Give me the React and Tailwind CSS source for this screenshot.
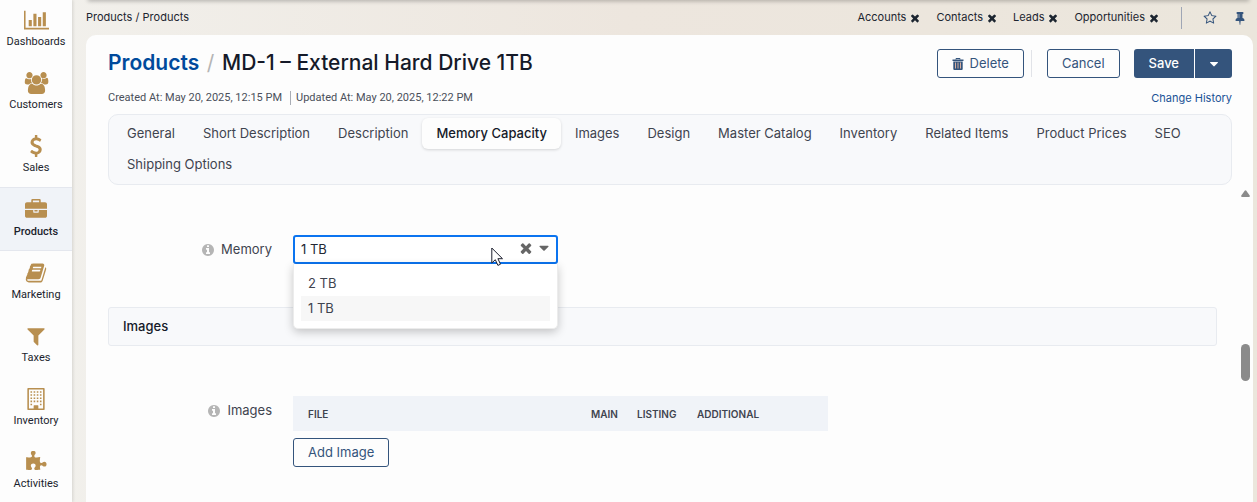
import React, { useState } from "react";

const PATHS = {
  chart:
    "M640 896v512h-256v-512h256zm384-512v1024h-256v-1024h256zm1024 1152v128h-2048v-1536h128v1408h1920zm-640-896v768h-256v-768h256zm384-384v1152h-256v-1152h256z",
  users:
    "M657 896q-162 5-265 128h-134q-82 0-138-40.5t-56-118.5q0-353 124-353 6 0 43.5 21t97.5 42.5 119 21.5q67 0 133-23-5 37-5 66 0 159 93 293zm1071 637q0 120-73 189.5t-194 69.5h-874q-121 0-194-69.5t-73-189.5q0-53 3.5-103.5t14-109 26.5-108.5 43-97.5 62-81 85.5-53.5 111.5-20q10 0 43 21.5t73 48 107 48 135 21.5 135-21.5 107-48 73-48 43-21.5q61 0 111.5 20t85.5 53.5 62 81 43 97.5 26.5 108.5 14 109 3.5 103.5zm-1024-1277q0 106-75 181t-181 75-181-75-75-181 75-181 181-75 181 75 75 181zm704 384q0 159-112.5 271.5t-271.5 112.5-271.5-112.5-112.5-271.5 112.5-271.5 271.5-112.5 271.5 112.5 112.5 271.5zm576 225q0 78-56 118.5t-138 40.5h-134q-103-123-265-128 93-134 93-293 0-29-5-66 66 23 133 23 59 0 119-21.5t97.5-42.5 43.5-21q124 0 124 353zm-128-609q0 106-75 181t-181 75-181-75-75-181 75-181 181-75 181 75 75 181z",
  dollar:
    "M1362 1185q0 153-99.5 263.5t-258.5 136.5v175q0 14-9 23t-23 9h-135q-13 0-22.5-9.5t-9.5-22.5v-175q-66-9-127.5-31t-101.5-44.5-74-48-46.5-37.5-17.5-18q-17-21-2-41l103-135q7-10 23-12 15-2 24 9l2 2q113 99 243 125 37 8 74 8 81 0 142.5-43t61.5-122q0-28-15-53t-33.5-42-58.5-37.5-66-32-80-32.5q-39-16-61.5-25t-61.5-26.5-62.5-31-56.5-35.5-53.5-42.5-43.5-49-35.5-58-21-66.5-8.5-78q0-138 98-242t255-134v-180q0-13 9.5-22.5t22.5-9.5h135q14 0 23 9t9 23v176q57 6 110.5 23t87 33.5 63.5 37.5 39 29 15 14q17 18 5 38l-81 146q-8 15-23 16-14 3-27-7-3-3-14.5-12t-39-26.5-58.5-32-74.5-26-85.5-11.5q-95 0-155 43t-60 111q0 26 8.5 48t29.5 41.5 39.5 33 56 31 60.5 27 70 27.5q53 20 81 31.5t76 35 75.5 42.5 62 50 53 63.5 31.5 76.5 13 94z",
  briefcase:
    "M640 256h512v-128h-512v128zm1152 640v480q0 66-47 113t-113 47h-1472q-66 0-113-47t-47-113v-480h672v160q0 26 19 45t45 19h320q26 0 45-19t19-45v-160h672zm-768 0v128h-256v-128h256zm768-480v384h-1792v-384q0-66 47-113t113-47h352v-160q0-40 28-68t68-28h576q40 0 68 28t28 68v160h352q66 0 113 47t47 113z",
  book:
    "M1703 478q40 57 18 129l-275 906q-19 64-76.5 107.5t-122.5 43.5h-923q-77 0-148.5-53.5t-99.5-131.5q-24-67-2-127 0-4 3-27t4-37q1-8-3-21.5t-3-19.5q2-11 8-21t16.5-23.5 16.5-23.5q23-38 45-91.5t30-91.5q3-10 .5-30t-.5-28q3-11 17-28t17-23q21-36 42-92t25-90q1-9-2.5-32t.5-28q4-13 22-30.5t22-22.5q19-26 42.5-84.5t27.5-96.5q1-8-3-25.5t-2-26.5q2-8 9-18t18-23 17-21q8-12 16.5-30.5t15-35 16-36 19.5-32 26.5-23.5 36-11.5 47.5 5.5l-1 3q38-9 51-9h761q74 0 114 56t18 130l-274 906q-36 119-71.5 153.5t-128.5 34.5h-869q-27 0-38 15-11 16-1 43 24 70 144 70h923q29 0 56-15.5t35-41.5l300-987q7-22 5-57 38 15 59 43zm-1064 2q-4 13 2 22.5t20 9.5h608q13 0 25.5-9.5t16.5-22.5l21-64q4-13-2-22.5t-20-9.5h-608q-13 0-25.5 9.5t-16.5 22.5zm-83 256q-4 13 2 22.5t20 9.5h608q13 0 25.5-9.5t16.5-22.5l21-64q4-13-2-22.5t-20-9.5h-608q-13 0-25.5 9.5t-16.5 22.5z",
  filter:
    "M1595 295q17 41-14 70l-493 493v742q0 42-39 59-13 5-25 5-27 0-45-19l-256-256q-19-19-19-45v-486l-493-493q-31-29-14-70 17-39 59-39h1280q42 0 59 39z",
  building:
    "M1536 0q26 0 45 19t19 45v1664q0 26-19 45t-45 19h-1280q-26 0-45-19t-19-45v-1664q0-26 19-45t45-19h1280zM1472 128h-1152v1536h384v-224q0-13 9.500-22.500t22.500-9.500h320q13 0 22.500 9.500t9.500 22.500v224h384zM448 256h128v128h-128zM704 256h128v128h-128zM960 256h128v128h-128zM1216 256h128v128h-128zM448 512h128v128h-128zM704 512h128v128h-128zM960 512h128v128h-128zM1216 512h128v128h-128zM448 768h128v128h-128zM704 768h128v128h-128zM960 768h128v128h-128zM1216 768h128v128h-128zM448 1024h128v128h-128zM704 1024h128v128h-128zM960 1024h128v128h-128zM1216 1024h128v128h-128zM448 1280h128v128h-128zM1216 1280h128v128h-128z",
  puzzle:
    "M1755 1083q0 81-44.5 135t-123.5 54q-41 0-77.500-17.500t-59-38-56.500-38-71-17.500q-110 0-110 124 0 39 16 115t15 115v5q-22 0-33 1-34 3-97.500 11.500t-115.500 13.500-98 5q-61 0-103-26.500t-42-83.500q0-37 17.500-71t38-56.500 38-59 17.500-77.500q0-79-54-123.500t-135-44.500q-84 0-143 45.500t-59 127.500q0 43 15 83t33.500 64.500 33.500 53 15 50.500q0 45-46 89-37 35-117 35-95 0-245-24-9-2-27.500-4t-27.500-4l-13-2q-1 0-3-1-2 0-2-1v-1024q2 1 17.500 3.500t34 5 21.500 3.500q150 24 245 24 80 0 117-35 46-44 46-89 0-22-15-50.500t-33.500-53-33.500-64.500-15-83q0-82 59-127.500t144-45.500q80 0 134 44.500t54 123.500q0 41-17.500 77.500t-38 59-38 56.500-17.500 71q0 57 42 83.500t103 26.500q64 0 180-15t163-17v2q-1 2-3.500 17.500t-5 34-3.500 21.500q-24 150-24 245 0 80 35 117 44 46 89 46 22 0 50.500-15t53-33.500 64.500-33.500 83-15q82 0 127.500 59t45.500 143z",
  times:
    "M1490 1322q0 40-28 68l-136 136q-28 28-68 28t-68-28l-294-294-294 294q-28 28-68 28t-68-28l-136-136q-28-28-28-68t28-68l294-294-294-294q-28-28-28-68t28-68l136-136q28-28 68-28t68 28l294 294 294-294q28-28 68-28t68 28l136 136q28 28 28 68t-28 68l-294 294 294 294q28 28 28 68z",
  info:
    "M1152 1376v-160q0-14-9-23t-23-9h-96v-512q0-14-9-23t-23-9h-320q-14 0-23 9t-9 23v160q0 14 9 23t23 9h96v320h-96q-14 0-23 9t-9 23v160q0 14 9 23t23 9h448q14 0 23-9t9-23zm-128-896v-160q0-14-9-23t-23-9h-192q-14 0-23 9t-9 23v160q0 14 9 23t23 9h192q14 0 23-9t9-23zm640 416q0 209-103 385.500t-279.500 279.500-385.500 103-385.500-103-279.500-279.500-103-385.500 103-385.500 279.500-279.500 385.500-103 385.500 103 279.500 279.500 103 385.500z",
  caret:
    "M1408 704q0 26-19 45l-448 448q-19 19-45 19t-45-19l-448-448q-19-19-19-45t19-45 45-19h896q26 0 45 19t19 45z",
  star:
    "M1201 1004l306-297-422-62-189-382-189 382-422 62 306 297-73 421 378-199 377 199zm527-357q0 22-26 48l-363 354 86 500q1 7 1 20 0 50-41 50-19 0-40-12l-449-236-449 236q-22 12-40 12-21 0-31.500-14.500t-10.500-35.500q0-6 2-20l86-500-364-354q-25-27-25-48 0-37 56-46l502-73 225-455q19-41 49-41t49 41l225 455 502 73q56 9 56 46z",
  pin:
    "M800 864v-448q0-14-9-23t-23-9-23 9-9 23v448q0 14 9 23t23 9 23-9 9-23zm672 352q0 26-19 45t-45 19h-429l-51 483q-2 12-10.500 20.500t-20.500 8.500h-1q-27 0-32-27l-76-485h-404q-26 0-45-19t-19-45q0-123 78.500-221.500t177.500-98.500v-512q-52 0-90-38t-38-90 38-90 90-38h640q52 0 90 38t38 90-38 90-90 38v512q99 0 177.500 98.500t78.500 221.500z",
};

function Icon({ name, wide, className }) {
  return (
    <svg
      viewBox={wide ? "0 0 2048 1792" : "0 0 1792 1792"}
      fill="currentColor"
      fillRule={name === "building" ? "evenodd" : "nonzero"}
      aria-hidden="true"
      className={className}
    >
      <path d={PATHS[name]} />
    </svg>
  );
}

const NAV = [
  { label: "Dashboards", icon: "chart", wide: true },
  { label: "Customers", icon: "users", wide: true },
  { label: "Sales", icon: "dollar" },
  { label: "Products", icon: "briefcase", active: true },
  { label: "Marketing", icon: "book" },
  { label: "Taxes", icon: "filter" },
  { label: "Inventory", icon: "building" },
  { label: "Activities", icon: "puzzle" },
];

const TABS = [
  "General",
  "Short Description",
  "Description",
  "Memory Capacity",
  "Images",
  "Design",
  "Master Catalog",
  "Inventory",
  "Related Items",
  "Product Prices",
  "SEO",
  "Shipping Options",
];

function Sidebar() {
  return (
    <nav className="relative z-10 w-[72px] shrink-0 overflow-hidden bg-[#fdfdfd] shadow-[1px_0_3px_rgba(0,0,0,0.12)]">
      <ul className="-mt-0.5">
        {NAV.map((n) => (
          <li key={n.label}>
            <a
              href="#"
              className={
                n.active
                  ? "flex h-16 flex-col items-center border-y border-[#e4e7ee] bg-[#f0f3f8] pt-[11px] font-['Roboto',sans-serif] text-[11px] leading-4 font-medium text-[#1c1f2e]"
                  : "flex h-[63px] flex-col items-center pt-[11px] font-['Roboto',sans-serif] text-[11px] leading-4 text-[#1c1f2e]"
              }
            >
              <Icon
                name={n.icon}
                wide={n.wide}
                className={n.wide ? "h-[22px] w-[25px] text-[#b88f50]" : "size-[22px] text-[#b88f50]"}
              />
              <span className="mt-[3px]">{n.label}</span>
            </a>
          </li>
        ))}
      </ul>
    </nav>
  );
}

function TopBar() {
  return (
    <div className="flex h-[35px] items-center justify-between pr-1.5 text-[11px] text-[#1c2530]">
      <div>
        <a href="#">Products</a> / <a href="#">Products</a>
      </div>
      <div className="flex items-center">
        <ul className="flex items-center gap-[15px]">
          {["Accounts", "Contacts", "Leads", "Opportunities"].map((p) => (
            <li key={p} className="flex items-center gap-[3px]">
              <a href="#">{p}</a>
              <button type="button" aria-label={`Close ${p}`}>
                <Icon name="times" className="size-3" />
              </button>
            </li>
          ))}
        </ul>
        <div className="ml-[21px] h-[22px] w-px bg-[#9fa6b5]" />
        <button type="button" aria-label="Add to favorites" className="ml-[21px] text-[#34547c]">
          <Icon name="star" className="size-[14px]" />
        </button>
        <button type="button" aria-label="Pin page" className="ml-4 text-[#34547c]">
          <Icon name="pin" className="size-[14px]" />
        </button>
      </div>
    </div>
  );
}

function TrashIcon() {
  return (
    <svg viewBox="0 0 12 12" className="size-3" aria-hidden="true">
      <path d="M4 1.500V.5h4v1" fill="none" stroke="currentColor" />
      <path d="M.5 1.500h11v1.500h-11zM1.300 3.500h9.400v7.500q0 1-1 1h-7.400q-1 0-1-1z" fill="currentColor" />
      <path d="M3.500 4.500v6M6 4.500v6M8.500 4.500v6" stroke="#e9b9a4" strokeWidth="0.900" />
    </svg>
  );
}

function PageHeader() {
  const outline =
    "flex h-[29px] items-center justify-center gap-1.5 rounded-[3px] border border-[#34547c] px-3.5 text-[13px] text-[#34547c]";
  return (
    <header>
      <div className="flex items-start justify-between">
        <h1 className="pt-[13px] text-[21px] leading-[30px] font-medium whitespace-nowrap text-[#151a29]">
          <a href="#" className="mr-0.5 font-semibold text-[#004a9c]">
            Products
          </a>{" "}
          <span className="mr-0.5 font-normal text-[#b5b5b5]">/</span> MD-1 – External Hard Drive 1TB
        </h1>
        <div className="flex items-center pt-3.5">
          <button type="button" className={outline}>
            <TrashIcon />
            Delete
          </button>
          <div className="mr-[15px] ml-[7px] h-[27px] w-px bg-[#e1e3e8]" />
          <button type="button" className={outline}>
            Cancel
          </button>
          <div className="ml-3.5 flex h-[29px] overflow-hidden rounded-[3px] bg-[#34547c] text-white">
            <button type="button" className="px-[15px] text-[13px] font-medium">
              Save
            </button>
            <button
              type="button"
              aria-label="More save options"
              className="flex w-[38px] items-center justify-center border-l border-white"
            >
              <Icon name="caret" className="size-[14px]" />
            </button>
          </div>
        </div>
      </div>
      <div className="mt-[13px] flex items-center justify-between">
        <ul className="flex items-center font-['Roboto',sans-serif] text-[11px] leading-[14px] text-[#4a4f5a]">
          <li className="border-r border-[#a9adb5] pr-2">Created At: May 20, 2025, 12:15 PM</li>
          <li className="pl-[5px]">Updated At: May 20, 2025, 12:22 PM</li>
        </ul>
        <a href="#" className="text-[11px] leading-[14px] text-[#1a5296]">
          Change History
        </a>
      </div>
    </header>
  );
}

function Tabs() {
  return (
    <ul className="mt-[9px] flex flex-wrap rounded-[10px] border border-[#e8ebf0] bg-[#f8f9fb] px-1 pt-[3px] pb-1">
      {TABS.map((t) => (
        <li key={t}>
          <a
            href="#"
            className={
              t === "Memory Capacity"
                ? "block h-[31px] rounded-md bg-[#fdfdfd] px-3.5 text-[13px] leading-[31px] font-medium text-[#151a29] shadow-[0_1px_3px_rgba(0,0,0,0.15)]"
                : "block h-[31px] px-3.5 text-[13px] leading-[31px] text-[#3f444f]"
            }
          >
            {t}
          </a>
        </li>
      ))}
    </ul>
  );
}

function MemoryField() {
  const [value, setValue] = useState("1 TB");
  return (
    <div className="flex items-start">
      <div className="flex h-[29px] w-[185px] shrink-0 items-center justify-end gap-1.5 pr-[21px] text-[13px] text-[#3f444f]">
        <Icon name="info" className="size-[14px] text-[#b5b5b5]" />
        <label htmlFor="memory">Memory</label>
      </div>
      <div className="relative w-[265px]">
        <select
          id="memory"
          value={value}
          onChange={(e) => setValue(e.target.value)}
          className="block h-[29px] w-full appearance-none rounded-[3px] border-2 border-[#0b74f0] bg-white px-1.5 text-[13px] text-[#232833] outline-none"
        >
          <option>2 TB</option>
          <option>1 TB</option>
        </select>
        <div className="pointer-events-none absolute top-[5px] right-1.5 flex items-center gap-0.5 text-[#666]">
          <Icon name="times" className="size-4" />
          <Icon name="caret" className="size-4" />
        </div>
        <ul
          role="listbox"
          aria-label="Memory options"
          className="absolute inset-x-0 top-full z-10 rounded-b-[5px] border border-t-0 border-[#ececec] bg-white px-[7px] pt-[7px] pb-[7px] text-[13px] leading-[25px] text-[#3f444f] shadow-[0_3px_10px_rgba(0,0,0,0.22)]"
        >
          <li role="option" aria-selected="false" className="px-[7px]">
            2 TB
          </li>
          <li role="option" aria-selected="true" className="bg-[#f7f7f7] px-[7px]">
            1 TB
          </li>
        </ul>
        <svg viewBox="0 0 12 20" className="absolute top-3 left-[198px] z-20 h-5 w-3" aria-hidden="true">
          <path
            d="M.8 1v15l3.500-3.300 2.600 5.700 2.600-1.200-2.600-5.500h4.600z"
            fill="#fff"
            stroke="#1c1f2e"
            strokeWidth="1"
          />
        </svg>
      </div>
    </div>
  );
}

function ImagesField() {
  return (
    <div className="flex items-start">
      <div className="flex h-[29px] w-[185px] shrink-0 items-center justify-end gap-1.5 pr-[21px] text-[13px] text-[#3f444f]">
        <Icon name="info" className="size-[14px] text-[#b5b5b5]" />
        <span id="images-label">Images</span>
      </div>
      <div className="w-[535px]">
        <table
          aria-labelledby="images-label"
          className="w-full table-fixed bg-[#f0f3f8] text-left text-[10px] text-[#3f444f]"
        >
          <thead>
            <tr className="h-[35px]">
              <th className="pt-0.5 pl-[15px] font-semibold">FILE</th>
              <th className="w-[46px] pt-0.5 font-semibold">MAIN</th>
              <th className="w-[60px] pt-0.5 font-semibold">LISTING</th>
              <th className="w-[131px] pt-0.5 font-semibold">ADDITIONAL</th>
            </tr>
          </thead>
        </table>
        <button
          type="button"
          className="mt-[7px] h-[29px] rounded-[3px] border border-[#34547c] px-3.5 text-[13px] text-[#34547c]"
        >
          Add Image
        </button>
      </div>
    </div>
  );
}

export default function App() {
  return (
    <div className="flex h-screen overflow-hidden bg-linear-to-r from-[#f2f1ed] via-[#ede6de] to-[#ebe6dc] font-['Inter',sans-serif] text-[#232833]">
      <Sidebar />
      <div className="relative flex min-w-0 flex-1 flex-col pr-1 pl-3.5">
        <div className="absolute -top-1 right-2 left-4 h-1 shadow-[0_1px_4px_rgba(0,0,0,0.3)]" />
        <TopBar />
        <main className="flex min-h-0 flex-1 flex-col rounded-t-[10px] bg-[#fdfdfd] pl-[22px]">
          <div className="pr-[21px]">
            <PageHeader />
            <Tabs />
          </div>
          <div className="flex min-h-0 flex-1 items-stretch">
            <div className="min-w-0 flex-1 pt-[50px] pr-6">
              <MemoryField />
              <h2 className="mt-[43px] h-[39px] rounded-[3px] border border-[#e8ebf0] bg-[#f8f9fb] px-3.5 text-[13px] leading-[37px] font-medium text-[#151a29]">
                Images
              </h2>
              <div className="mt-[50px]">
                <ImagesField />
              </div>
            </div>
            <div className="flex w-3 shrink-0 flex-col items-start" aria-hidden="true">
              <svg viewBox="0 0 9 7" className="mt-[5px] h-[7px] w-[9px]">
                <path d="M3.700.8q.8-.9 1.600 0l3.400 4.700q.5 1.400-.8 1.500H1.100Q-.2 6.900.3 5.500z" fill="#8b8b8b" />
              </svg>
              <div className="mt-[147px] h-[37px] w-[9px] rounded-full bg-[#8b8b8b]" />
            </div>
          </div>
        </main>
      </div>
    </div>
  );
}
